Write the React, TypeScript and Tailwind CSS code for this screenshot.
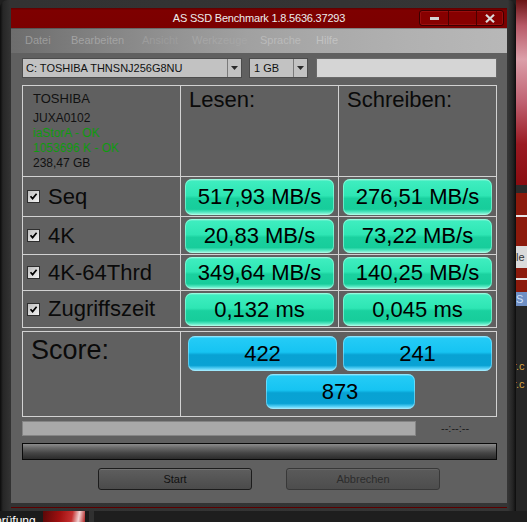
import type { ReactNode } from "react";

const rows = [
  { label: "Seq", read: "517,93 MB/s", write: "276,51 MB/s" },
  { label: "4K", read: "20,83 MB/s", write: "73,22 MB/s" },
  { label: "4K-64Thrd", read: "349,64 MB/s", write: "140,25 MB/s" },
  { label: "Zugriffszeit", read: "0,132 ms", write: "0,045 ms" },
];

const menu = [
  { name: "Datei", cls: "w-[46px] text-[#9c9c9c]" },
  { name: "Bearbeiten", cls: "w-[71px] text-[#a3a3a3]" },
  { name: "Ansicht", cls: "w-[50px] text-[#9c9c9c]" },
  { name: "Werkzeuge", cls: "w-[68px] text-[#a6a6a6]" },
  { name: "Sprache", cls: "w-[56px] text-[#bababa]" },
  { name: "Hilfe", cls: "w-[40px] text-[#c2c2c2]" },
];

function GreenPill({ children }: { children: ReactNode }) {
  return (
    <div className="h-full w-full rounded-[7px] bg-[linear-gradient(180deg,#8ff5da_0%,#3eedbf_7%,#2ee6b4_46%,#1ad19f_54%,#17cd9b_84%,#52e7c0_92%,#b0f9e6_100%)] shadow-[inset_0_0_0_1px_rgba(170,255,230,0.55)] flex items-center justify-center text-[22px] leading-none text-black">
      {children}
    </div>
  );
}

function BluePill({ children }: { children: ReactNode }) {
  return (
    <div className="h-[35px] w-[149px] rounded-[7px] bg-[linear-gradient(180deg,#8ce3fb_0%,#24cbf6_7%,#16c4f2_46%,#08a2d3_54%,#09a2d4_84%,#4dccf4_92%,#a8ecfe_100%)] shadow-[inset_0_0_0_1px_rgba(160,235,255,0.55)] flex items-center justify-center text-[22px] leading-none text-black">
      {children}
    </div>
  );
}

function CheckBox() {
  return (
    <div className="w-[13px] h-[13px] border border-[#2e2e2e] bg-[linear-gradient(135deg,#bdbdbd,#f2f2f2)] flex items-center justify-center">
      <svg width="9" height="9" viewBox="0 0 9 9">
        <path d="M1.5 4.2 L3.6 6.6 L7.6 1.8" stroke="#000" strokeWidth="1.7" fill="none" />
      </svg>
    </div>
  );
}

function ComboArrow() {
  return (
    <div className="w-[14px] h-full border-l border-[#7a7a7a] flex items-center justify-center">
      <svg width="7" height="4" viewBox="0 0 7 4">
        <polygon points="0,0 7,0 3.5,4" fill="#2a2a2a" />
      </svg>
    </div>
  );
}

export default function App() {
  return (
    <div className="w-[527px] h-[522px] overflow-hidden bg-[#1f1f1f] flex flex-col font-['Liberation_Sans',Arial,sans-serif]">
      <div className="flex h-[511px]">
        {/* Window */}
        <div className="w-[516px] flex flex-col rounded-t-[8px] pl-[11px] pr-[9px] pt-[8px] bg-[linear-gradient(90deg,#0c0c0c_0px,#262626_3px,#323232_10px,#353535_calc(100%_-_8px),#232323_calc(100%_-_3px),#0c0c0c_100%)]">
          {/* Title bar */}
          <div className="h-[20px] grid grid-cols-[85px_1fr_85px] items-center px-[3px] bg-[linear-gradient(180deg,#5e0000_0%,#7e0000_12%,#7b0000_100%)]">
            <div />
            <div className="text-center text-[11px] tracking-[-0.2px] text-[#ececec]">AS SSD Benchmark 1.8.5636.37293</div>
            <div className="h-[16px] flex rounded-[3px] border border-[#3a0000] bg-[#870000] shadow-[inset_0_0_0_1px_rgba(190,40,40,0.35)]">
              <div className="w-[28px] flex items-end justify-center pb-[5px]">
                <div className="w-[9px] h-[3px] bg-[#d4d4d4]" />
              </div>
              <div className="w-[28px] border-l border-[#4a0000]" />
              <div className="flex-1 border-l border-[#4a0000] flex items-center justify-center">
                <svg width="10" height="9" viewBox="0 0 10 9">
                  <path d="M1 0.8 L9 8.2 M9 0.8 L1 8.2" stroke="#d8d8d8" strokeWidth="2.2" />
                </svg>
              </div>
            </div>
          </div>

          {/* Menu bar */}
          <div className="h-[25px] flex items-center pl-[14px] text-[11px] bg-[linear-gradient(90deg,#6d6d6d_0%,#858585_20%,#959595_35%,#a1a1a1_48%,#a9a9a9_62%,#b1b1b1_80%,#b8b8b8_100%)] shadow-[inset_0_1px_0_rgba(0,0,0,0.25)]">
            {menu.map((m) => (
              <span key={m.name} className={m.cls}>
                {m.name}
              </span>
            ))}
          </div>

          {/* Panel */}
          <div className="flex-1 bg-[#606060] pl-[11px] pr-[10px] pt-[5px] flex flex-col">
            {/* Drive / size selectors */}
            <div className="h-[20px] flex text-[11px] text-[#111]">
              <div className="w-[220px] h-full border border-[#4c4c4c] bg-[#c2c2c2] flex items-center">
                <span className="flex-1 pl-[3px]">C: TOSHIBA THNSNJ256G8NU</span>
                <ComboArrow />
              </div>
              <div className="ml-[7px] w-[59px] h-full border border-[#4c4c4c] bg-[#c2c2c2] flex items-center">
                <span className="flex-1 pl-[4px]">1 GB</span>
                <ComboArrow />
              </div>
              <div className="ml-[8px] flex-1 h-full bg-[#d5d5d5] border border-[#6a6a6a]" />
            </div>

            {/* Results */}
            <div className="mt-[7px] w-[475px] grid grid-cols-[157px_157px_157px] grid-rows-[90px_39px_37px_35px_36px] gap-px p-px bg-[#d2d2d2]">
              <div className="bg-[#606060] pl-[10px] pt-[5px] text-[12px] leading-[15px] text-[#111]">
                <div className="text-[13px]">TOSHIBA</div>
                <div className="mt-[5px]">JUXA0102</div>
                <div className="text-[#0f9a0f]">iaStorA - OK</div>
                <div className="text-[#0f9a0f]">1053696 K - OK</div>
                <div>238,47 GB</div>
              </div>
              <div className="bg-[#606060] pl-[8px] pt-[3px] text-[22px] leading-[22px] text-[#0a0a0a]">Lesen:</div>
              <div className="bg-[#606060] pl-[8px] pt-[3px] text-[22px] leading-[22px] text-[#0a0a0a]">Schreiben:</div>
              {rows.map((r) => (
                <div key={r.label} className="contents">
                  <div className="bg-[#606060] flex items-center pl-[4px] gap-[8px]">
                    <CheckBox />
                    <span className="text-[22px] leading-none text-[#0a0a0a]">{r.label}</span>
                  </div>
                  <div className="bg-[#606060] px-[4px] pt-[2px] pb-px">
                    <GreenPill>{r.read}</GreenPill>
                  </div>
                  <div className="bg-[#606060] px-[4px] pt-[2px] pb-px">
                    <GreenPill>{r.write}</GreenPill>
                  </div>
                </div>
              ))}
            </div>

            {/* Score */}
            <div className="mt-[3px] w-[475px] h-[86px] grid grid-cols-[157px_315px] gap-px p-px bg-[#d2d2d2]">
              <div className="bg-[#606060] pl-[8px] pt-[5px] text-[27px] leading-[27px] text-[#0a0a0a]">Score:</div>
              <div className="bg-[#606060] pl-[7px] pt-[4px]">
                <div className="flex gap-[6px]">
                  <BluePill>422</BluePill>
                  <BluePill>241</BluePill>
                </div>
                <div className="mt-[3px] w-[304px] flex justify-center">
                  <BluePill>873</BluePill>
                </div>
              </div>
            </div>

            {/* Progress */}
            <div className="mt-[4px] h-[15px] flex items-center">
              <div className="w-[394px] h-full bg-[#a9a9a9] border border-[#858585]" />
              <span className="ml-[25px] text-[11px] text-[#1a1a1a]">--:--:--</span>
            </div>
            <div className="mt-[7px] h-[17px] border border-[#0a0a0a] bg-[linear-gradient(180deg,#8c8c8c_0%,#6a6a6a_25%,#454545_60%,#2b2b2b_100%)]" />

            {/* Buttons */}
            <div className="mt-[8px] h-[22px] flex pl-[76px] gap-[34px] text-[11px]">
              <div className="w-[154px] h-full rounded-[3px] border border-[#1c1c1c] bg-[linear-gradient(180deg,#5e5e5e,#4b4b4b)] shadow-[inset_0_1px_0_rgba(255,255,255,0.12)] flex items-center justify-center text-[#111]">
                Start
              </div>
              <div className="w-[154px] h-full rounded-[3px] border border-[#383838] bg-[linear-gradient(180deg,#5a5a5a,#4d4d4d)] shadow-[inset_0_1px_0_rgba(255,255,255,0.08)] flex items-center justify-center text-[#2c2c2c]">
                Abbrechen
              </div>
            </div>
          </div>

          {/* Bottom frame */}
          <div className="h-[8px] pt-[4px]">
            <div className="h-px bg-[#5c0000]" />
          </div>
        </div>

        {/* Desktop behind the window, right side */}
        <div className="flex-1 flex flex-col overflow-hidden text-[11px] leading-none">
          <div className="h-[185px] bg-[linear-gradient(180deg,#6a1414_0%,#b85a68_14%,#dca0aa_32%,#c06272_55%,#9a1a22_78%,#8a0c10_100%)]" />
          <div className="h-[8px] bg-[#2a2a2a]" />
          <div className="h-[22px] bg-[#8c1a0c]" />
          <div className="h-[2px] bg-[#e6e6e6]" />
          <div className="h-[29px] bg-[#8c1a0c]" />
          <div className="h-[22px] bg-[#dadada] flex items-center text-[#333] whitespace-nowrap">le</div>
          <div className="h-[10px] bg-[#8c1a0c]" />
          <div className="h-[2px] bg-[#e6e6e6]" />
          <div className="h-[12px] bg-[#8c1a0c]" />
          <div className="h-[14px] bg-[#6f8fc4] flex items-center text-[#cfe0f8]">S</div>
          <div className="flex-1 bg-[#262626] pt-[51px] text-[#d9a441] whitespace-nowrap leading-[18px]">
            <div className="-ml-[3px]">r.c</div>
            <div className="-ml-[3px]">r.c</div>
          </div>
        </div>
      </div>

      {/* Desktop behind the window, bottom */}
      <div className="flex-1 flex overflow-hidden">
        <div className="w-[43px] bg-[#1b1b1b] overflow-hidden">
          <div className="-ml-[5px] pt-[3px] text-[12px] leading-[14px] text-white whitespace-nowrap">prüfung</div>
        </div>
        <div className="w-[42px] bg-[linear-gradient(100deg,#5a0808_0%,#a01010_40%,#c43030_68%,#f0d2d2_84%,#b02020_100%)]" />
        <div className="w-[4px] bg-[#1a1a1a]" />
        <div className="w-[5px] bg-[#303030]" />
        <div className="flex-1 bg-[#1e1e1e]" />
      </div>
    </div>
  );
}
